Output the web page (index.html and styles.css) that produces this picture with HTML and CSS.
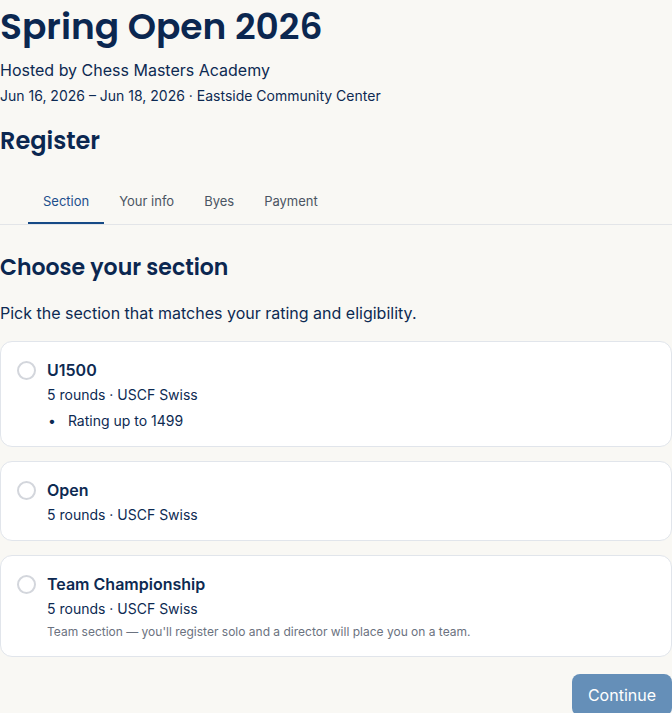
FILE: index.html
```html
<!DOCTYPE html>
<html lang="en">
<head>
  <meta charset="UTF-8">
  <meta name="viewport" content="width=device-width, initial-scale=1.0">
  <title>Spring Open 2026 - Register</title>
  <link rel="stylesheet" href="styles.css">
</head>
<body>
  <header class="event">
    <h1>Spring Open 2026</h1>
    <p class="host">Hosted by Chess Masters Academy</p>
    <p class="meta">Jun 16, 2026 – Jun 18, 2026 · Eastside Community Center</p>
  </header>

  <h2 class="register-title">Register</h2>

  <nav class="tabs">
    <a class="tab active">Section</a>
    <a class="tab">Your info</a>
    <a class="tab">Byes</a>
    <a class="tab">Payment</a>
  </nav>

  <section class="step">
    <h3>Choose your section</h3>
    <p class="lead">Pick the section that matches your rating and eligibility.</p>

    <div class="options">
      <label class="option">
        <input type="radio" name="section">
        <div class="option-body">
          <div class="option-title">U1500</div>
          <div class="option-sub">5 rounds · USCF Swiss</div>
          <ul class="option-rules">
            <li>Rating up to 1499</li>
          </ul>
        </div>
      </label>

      <label class="option">
        <input type="radio" name="section">
        <div class="option-body">
          <div class="option-title">Open</div>
          <div class="option-sub">5 rounds · USCF Swiss</div>
        </div>
      </label>

      <label class="option">
        <input type="radio" name="section">
        <div class="option-body">
          <div class="option-title">Team Championship</div>
          <div class="option-sub">5 rounds · USCF Swiss</div>
          <div class="option-note">Team section — you'll register solo and a director will place you on a team.</div>
        </div>
      </label>
    </div>

    <div class="actions">
      <button class="btn" disabled>Continue</button>
    </div>
  </section>
</body>
</html>
```

FILE: styles.css
```css
* {
  box-sizing: border-box;
  margin: 0;
  padding: 0;
}
body {
  background-color: #f9f8f4;
  font-family: Inter, "Liberation Sans", sans-serif;
  color: #0d2a52;
}
h1, h2, h3 {
  font-family: Poppins, Inter, sans-serif;
  font-weight: 600;
  color: #0b2750;
}
.event {
  padding-top: 2px;
}
.event h1 {
  font-size: 36px;
  line-height: 50px;
}
.event .host {
  font-size: 16px;
  line-height: 24px;
  margin-top: 6px;
}
.event .meta {
  font-size: 14px;
  line-height: 20px;
  margin-top: 4px;
}
.register-title {
  font-size: 24px;
  line-height: 32px;
  margin-top: 19px;
}
.tabs {
  display: flex;
  padding-left: 28px;
  margin-top: 28px;
  border-bottom: 1px solid #e3e5e8;
}
.tab {
  padding: 0 15px;
  height: 39px;
  line-height: 32px;
  font-size: 13px;
  color: #4b5563;
  cursor: pointer;
}
.tab.active {
  color: #1d4f8c;
  border-bottom: 2px solid #164a86;
}
.step {
  padding-top: 27px;
}
.step h3 {
  font-size: 22px;
  line-height: 32px;
}
.lead {
  font-size: 16px;
  line-height: 24px;
  margin-top: 17px;
}
.options {
  display: flex;
  flex-direction: column;
  gap: 14px;
  margin-top: 16px;
}
.option {
  display: flex;
  gap: 11px;
  padding: 17px 16px 15px;
  background-color: #fff;
  border: 1px solid #e1e5eb;
  border-radius: 12px;
  cursor: pointer;
}
.option input {
  appearance: none;
  -webkit-appearance: none;
  width: 19px;
  height: 19px;
  margin-top: 2px;
  border: 2px solid #d3d6dc;
  border-radius: 50%;
  flex-shrink: 0;
}
.option-title {
  font-size: 16px;
  font-weight: 600;
  line-height: 22px;
}
.option-sub {
  font-size: 14px;
  line-height: 20px;
  margin-top: 4px;
}
.option-rules {
  list-style: none;
  margin-top: 6px;
  font-size: 14px;
  line-height: 20px;
}
.option-rules li {
  display: flex;
  gap: 12px;
}
.option-rules li::before {
  content: "•";
  padding-left: 1px;
}
.option-note {
  margin-top: 4px;
  font-size: 12px;
  line-height: 18px;
  color: #6b7280;
}
.actions {
  display: flex;
  justify-content: flex-end;
  margin-top: 17px;
}
.btn {
  padding: 0 16px;
  height: 42px;
  border: none;
  border-radius: 8px;
  background-color: #658fb8;
  color: #fff;
  font-family: Inter, sans-serif;
  font-size: 16px;
}
```
